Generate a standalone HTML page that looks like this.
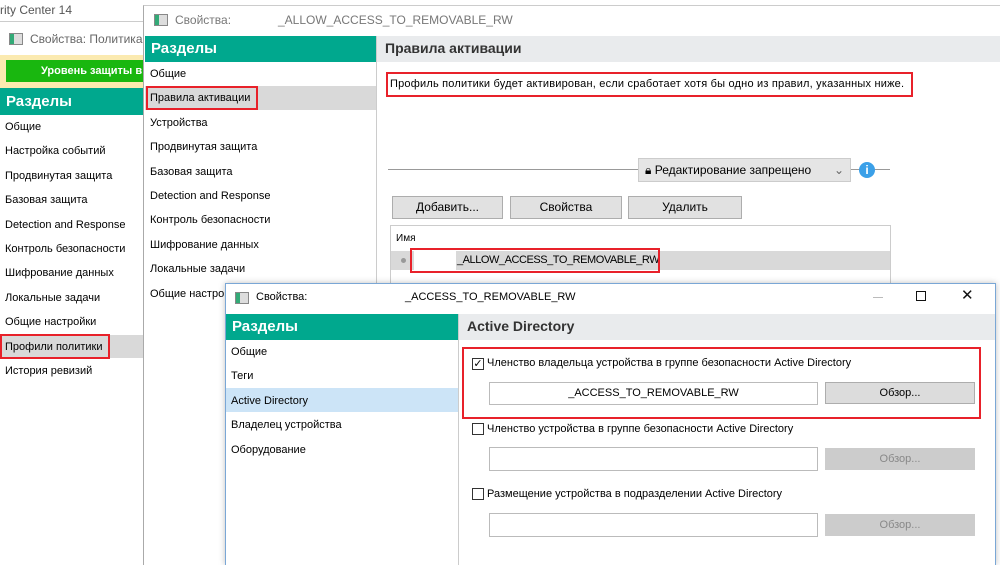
<!DOCTYPE html>
<html><head><meta charset="utf-8"><style>
*{margin:0;padding:0;box-sizing:border-box}
body{width:1000px;height:565px;overflow:hidden;background:#fff;font-family:"Liberation Sans",sans-serif;font-size:11px;color:#000;position:relative}
.a{position:absolute;white-space:nowrap}
.teal{background:#00a88e;color:#fff;font-weight:bold;font-size:15px;padding-left:6px;line-height:25px}
.hdr{background:#e9ebed;color:#333;font-weight:bold;font-size:14px;padding-left:8px;line-height:25px}
.btn{background:#e1e1e1;border:1px solid #adadad;text-align:center;line-height:21px;font-size:11px}
.dis{background:#ccc;border:1px solid #ccc;color:#888;text-align:center;line-height:21px}
.inp{background:#fff;border:1px solid #bbb;text-align:center;line-height:21px}
.red{border:2px solid #e8212a}
.cb{width:12px;height:12px;border:1px solid #333;background:#fff}
.ico{width:14px;height:12px;border:1px solid #888;background:linear-gradient(90deg,#3a7 0 4px,#ddd 4px)}
</style></head><body>
<!-- window 1 -->
<div class="a" style="left:0;top:0;width:145px;height:565px;background:#fff"></div>
<div class="a" style="left:0;top:0;width:145px;height:22px;border-bottom:1px solid #ccc;color:#555;font-size:12px;line-height:20px">rity Center 14</div>
<div class="a ico" style="left:9px;top:33px"></div>
<div class="a" style="left:30px;top:32px;color:#666;font-size:12px">Свойства: Политика</div>
<div class="a" style="left:0;top:55px;width:145px;height:33px;background:#fbeab0"></div>
<div class="a" style="left:6px;top:60px;width:139px;height:22px;background:#19b70f;color:#fff;font-weight:bold;line-height:22px;padding-left:35px">Уровень защиты в</div>
<div class="a teal" style="left:0;top:88px;width:145px;height:27px;line-height:27px">Разделы</div>
<div class="a" style="left:0;top:335px;width:145px;height:23px;background:#d9d9d9"></div>
<div class="a red" style="left:0;top:334px;width:110px;height:25px"></div>
<div class="a" style="left:5px;top:115px;line-height:24.4px">Общие<br>Настройка событий<br>Продвинутая защита<br>Базовая защита<br>Detection and Response<br>Контроль безопасности<br>Шифрование данных<br>Локальные задачи<br>Общие настройки<br>Профили политики<br>История ревизий</div>
<!-- window 2 -->
<div class="a" style="left:143px;top:5px;width:857px;height:560px;background:#fff;border-left:1px solid #aaa;border-top:1px solid #ccc"></div>
<div class="a ico" style="left:154px;top:14px"></div>
<div class="a" style="left:175px;top:13px;color:#777;font-size:12px">Свойства:</div>
<div class="a" style="left:278px;top:13px;color:#777;font-size:12px">_ALLOW_ACCESS_TO_REMOVABLE_RW</div>
<div class="a teal" style="left:145px;top:36px;width:231px;height:26px">Разделы</div>
<div class="a" style="left:376px;top:36px;width:1px;height:250px;background:#ccc"></div>
<div class="a hdr" style="left:377px;top:36px;width:623px;height:26px">Правила активации</div>
<div class="a" style="left:145px;top:86px;width:231px;height:24px;background:#d9d9d9"></div>
<div class="a red" style="left:146px;top:86px;width:112px;height:24px"></div>
<div class="a" style="left:150px;top:62px;line-height:24.4px">Общие<br>Правила активации<br>Устройства<br>Продвинутая защита<br>Базовая защита<br>Detection and Response<br>Контроль безопасности<br>Шифрование данных<br>Локальные задачи<br>Общие настройки</div>
<div class="a red" style="left:386px;top:72px;width:527px;height:25px"></div>
<div class="a" style="left:390px;top:78px;letter-spacing:0.2px">Профиль политики будет активирован, если сработает хотя бы одно из правил, указанных ниже.</div>
<div class="a" style="left:388px;top:169px;width:502px;height:1px;background:#999"></div>
<div class="a" style="left:638px;top:158px;width:213px;height:24px;background:#e5e5e5;border:1px solid #ccc;line-height:22px;padding-left:6px;font-size:12px">&#128274;&#xFE0E; Редактирование запрещено<span style="position:absolute;right:6px;color:#666">&#8964;</span></div>
<div class="a" style="left:859px;top:162px;width:16px;height:16px;border-radius:50%;background:#3ba0e8;color:#fff;font-weight:bold;text-align:center;line-height:16px;font-size:12px">i</div>
<div class="a btn" style="left:392px;top:196px;width:111px;height:23px;font-size:12px">Добавить...</div>
<div class="a btn" style="left:510px;top:196px;width:112px;height:23px;font-size:12px">Свойства</div>
<div class="a btn" style="left:628px;top:196px;width:114px;height:23px;font-size:12px">Удалить</div>
<div class="a" style="left:390px;top:225px;width:501px;height:70px;border:1px solid #ccc"></div>
<div class="a" style="left:396px;top:233px;font-size:10px">Имя</div>
<div class="a" style="left:391px;top:251px;width:499px;height:19px;background:#d9d9d9"></div>
<div class="a" style="left:401px;top:258px;width:5px;height:5px;border-radius:50%;background:#999"></div>
<div class="a" style="left:414px;top:251px;width:42px;height:19px;background:#fff"></div>
<div class="a" style="left:457px;top:254px;letter-spacing:-0.45px">_ALLOW_ACCESS_TO_REMOVABLE_RW</div>
<div class="a red" style="left:410px;top:248px;width:250px;height:25px"></div>
<!-- window 3 -->
<div class="a" style="left:225px;top:283px;width:771px;height:282px;background:#fff;border:1px solid #7aa7d6;border-bottom:none;box-shadow:0 0 6px rgba(0,0,0,.25)"></div>
<div class="a ico" style="left:235px;top:292px"></div>
<div class="a" style="left:256px;top:291px;font-size:11px">Свойства:</div>
<div class="a" style="left:405px;top:291px;font-size:11px">_ACCESS_TO_REMOVABLE_RW</div>
<div class="a" style="left:873px;top:297px;width:10px;height:1px;background:#bbb"></div>
<div class="a" style="left:916px;top:291px;width:10px;height:10px;border:1px solid #111"></div>
<div class="a" style="left:961px;top:286px;font-size:15px;color:#111">✕</div>
<div class="a teal" style="left:226px;top:314px;width:232px;height:26px">Разделы</div>
<div class="a" style="left:458px;top:314px;width:1px;height:251px;background:#ccc"></div>
<div class="a hdr" style="left:459px;top:314px;width:536px;height:26px">Active Directory</div>
<div class="a" style="left:226px;top:388px;width:232px;height:24px;background:#cce4f7"></div>
<div class="a" style="left:231px;top:340px;line-height:24.4px">Общие<br>Теги<br>Active Directory<br>Владелец устройства<br>Оборудование</div>
<div class="a red" style="left:462px;top:347px;width:519px;height:72px"></div>
<div class="a cb" style="left:472px;top:358px;font-size:11px;line-height:10px;text-align:center">✓</div>
<div class="a" style="left:487px;top:357px">Членство владельца устройства в группе безопасности Active Directory</div>
<div class="a inp" style="left:489px;top:382px;width:329px;height:23px">_ACCESS_TO_REMOVABLE_RW</div>
<div class="a btn" style="left:825px;top:382px;width:150px;height:22px;background:#dcdcdc">Обзор...</div>
<div class="a cb" style="left:472px;top:423px"></div>
<div class="a" style="left:487px;top:423px">Членство устройства в группе безопасности Active Directory</div>
<div class="a inp" style="left:489px;top:447px;width:329px;height:24px"></div>
<div class="a dis" style="left:825px;top:448px;width:150px;height:22px">Обзор...</div>
<div class="a cb" style="left:472px;top:488px"></div>
<div class="a" style="left:487px;top:488px">Размещение устройства в подразделении Active Directory</div>
<div class="a inp" style="left:489px;top:513px;width:329px;height:24px"></div>
<div class="a dis" style="left:825px;top:514px;width:150px;height:22px">Обзор...</div>
</body></html>
